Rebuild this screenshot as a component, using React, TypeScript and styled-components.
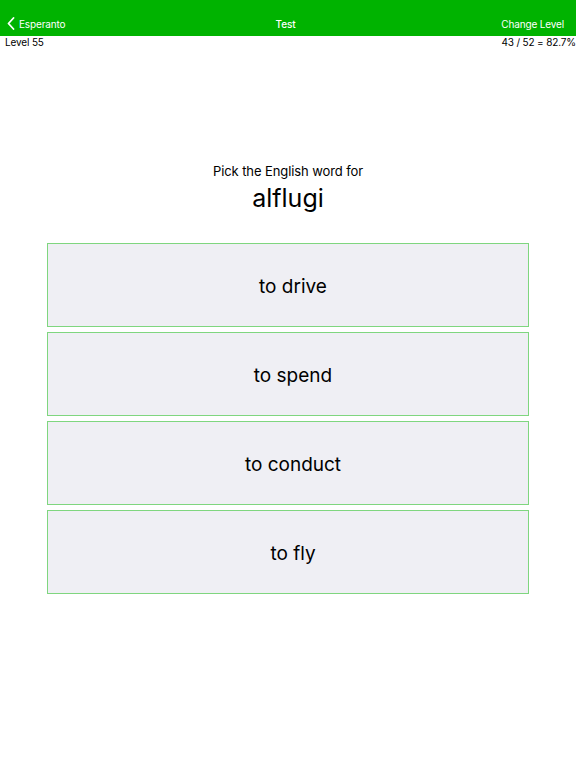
import React from 'react';
import styled, { createGlobalStyle } from 'styled-components';

const GlobalStyle = createGlobalStyle`
  html, body {
    margin: 0;
    padding: 0;
    background: #ffffff;
  }
  body {
    font-family: Inter, "Noto Sans", "Liberation Sans", sans-serif;
    color: #000000;
  }
`;

const Page = styled.div`
  width: 576px;
  height: 768px;
  display: flex;
  flex-direction: column;
  background: #ffffff;
`;

const NavBar = styled.div`
  height: 36px;
  background: #00b300;
  display: grid;
  grid-template-columns: 1fr auto 1fr;
  align-items: center;
  padding: 11px 12px 0 7px;
  box-sizing: border-box;
  color: #ffffff;
  font-size: 10px;
  letter-spacing: -0.15px;
`;

const BackButton = styled.div`
  display: flex;
  align-items: center;
  gap: 4px;
  justify-self: start;
`;

const NavTitle = styled.div`
  font-weight: 500;
`;

const NavAction = styled.div`
  justify-self: end;
`;

const InfoRow = styled.div`
  display: flex;
  justify-content: space-between;
  padding: 0 0 0 5px;
  height: 14px;
  font-size: 10px;
  line-height: 13px;
  letter-spacing: -0.15px;
  color: #000000;
`;

const Prompt = styled.div`
  margin-top: 113px;
  display: flex;
  flex-direction: column;
  align-items: center;
`;

const PromptLabel = styled.div`
  font-size: 13px;
  line-height: 16px;
  letter-spacing: -0.1px;
`;

const PromptWord = styled.div`
  font-size: 25px;
  line-height: 30px;
  margin-top: 4px;
`;

const Choices = styled.div`
  margin: 30px 47px 0 47px;
  display: flex;
  flex-direction: column;
  gap: 5px;
`;

const Choice = styled.button`
  height: 84px;
  width: 100%;
  background: #efeff4;
  border: 1px solid #7fd67f;
  font-family: inherit;
  font-size: 19px;
  color: #000000;
  padding: 2px 0 0 10px;
  cursor: pointer;
`;

const answers = ['to drive', 'to spend', 'to conduct', 'to fly'];

function Chevron() {
  return (
    <svg width="8" height="13" viewBox="0 0 8 13" fill="none">
      <path d="M6.5 1 L1.5 6.5 L6.5 12" stroke="#ffffff" strokeWidth="1.8" strokeLinecap="round" strokeLinejoin="round" />
    </svg>
  );
}

export default function App() {
  return (
    <Page>
      <GlobalStyle />
      <NavBar>
        <BackButton>
          <Chevron />
          <span>Esperanto</span>
        </BackButton>
        <NavTitle>Test</NavTitle>
        <NavAction>Change Level</NavAction>
      </NavBar>
      <InfoRow>
        <span>Level 55</span>
        <span>43 / 52 = 82.7%</span>
      </InfoRow>
      <Prompt>
        <PromptLabel>Pick the English word for</PromptLabel>
        <PromptWord>alflugi</PromptWord>
      </Prompt>
      <Choices>
        {answers.map((a) => (
          <Choice key={a}>{a}</Choice>
        ))}
      </Choices>
    </Page>
  );
}
